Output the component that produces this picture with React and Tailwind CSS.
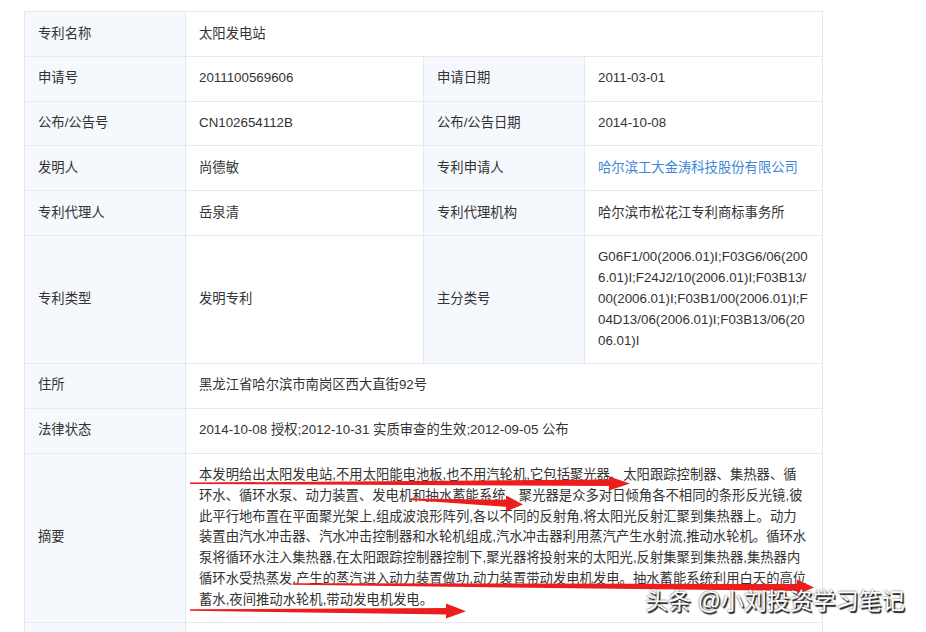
import React from "react";

const abstractLines = [
  "本发明给出太阳发电站,不用太阳能电池板,也不用汽轮机,它包括聚光器、太阳跟踪控制器、集热器、循",
  "环水、循环水泵、动力装置、发电机和抽水蓄能系统。聚光器是众多对日倾角各不相同的条形反光镜,彼",
  "此平行地布置在平面聚光架上,组成波浪形阵列,各以不同的反射角,将太阳光反射汇聚到集热器上。动力",
  "装置由汽水冲击器、汽水冲击控制器和水轮机组成,汽水冲击器利用蒸汽产生水射流,推动水轮机。循环水",
  "泵将循环水注入集热器,在太阳跟踪控制器控制下,聚光器将投射来的太阳光,反射集聚到集热器,集热器内",
  "循环水受热蒸发,产生的蒸汽进入动力装置做功,动力装置带动发电机发电。抽水蓄能系统利用白天的高位",
  "蓄水,夜间推动水轮机,带动发电机发电。",
];

const classLines = [
  "G06F1/00(2006.01)I;F03G6/06(200",
  "6.01)I;F24J2/10(2006.01)I;F03B13/",
  "00(2006.01)I;F03B1/00(2006.01)I;F",
  "04D13/06(2006.01)I;F03B13/06(20",
  "06.01)I",
];

// every text line gets a fixed box so mixed latin/CJK fonts don't grow the rows
const Line = ({ children }) => <div className="h-[20.8px] whitespace-nowrap">{children}</div>;

const Label = ({ children }) => (
  <td className="border border-[#e6eaf0] bg-[#f5f8fd] px-[13px] py-[11.5px] align-middle">
    <Line>{children}</Line>
  </td>
);

const Value = ({ children, span, lines }) => (
  <td colSpan={span} className="border border-[#e6eaf0] bg-white px-[13px] py-[11.5px] align-middle">
    {lines ? lines.map((l) => <Line key={l}>{l}</Line>) : <Line>{children}</Line>}
  </td>
);

// red marker arrows drawn over the abstract
const Arrows = () => (
  <svg className="absolute top-0 left-0 pointer-events-none" width="926" height="632" viewBox="0 0 926 632">
    <g fill="#ee1d1d">
      <polygon points="190,482.6 190,484 612,486 612,479.5" />
      <polygon points="609,476.5 630,483.5 609,490.5" />
      <polygon points="410,498.5 410,500 509,507 509,500" />
      <polygon points="506,495.5 523,504.5 506,511.5" />
      <polygon points="293,583.2 293,584.8 800,591 800,584" />
      <polygon points="797,579.5 814,587.5 797,594.5" />
      <polygon points="190,609.3 190,610.7 449,614.5 449,608" />
      <polygon points="446,603.5 466,611.3 446,618.5" />
    </g>
  </svg>
);

export default function App() {
  return (
    <div className="relative w-[926px] h-[632px] overflow-hidden bg-white font-['Liberation_Sans','Noto_Sans_CJK_SC',sans-serif] text-[13.33px] leading-[20.8px] text-[#333]">
      <div className="pt-[11px] pl-[24px]">
        <table className="table-fixed border-collapse w-[798px]">
          <colgroup>
            <col className="w-[161px]" />
            <col className="w-[238px]" />
            <col className="w-[161px]" />
            <col className="w-[238px]" />
          </colgroup>
          <tbody>
            <tr>
              <Label>专利名称</Label>
              <Value span={3}>太阳发电站</Value>
            </tr>
            <tr>
              <Label>申请号</Label>
              <Value>2011100569606</Value>
              <Label>申请日期</Label>
              <Value>2011-03-01</Value>
            </tr>
            <tr>
              <Label>公布/公告号</Label>
              <Value>CN102654112B</Value>
              <Label>公布/公告日期</Label>
              <Value>2014-10-08</Value>
            </tr>
            <tr>
              <Label>发明人</Label>
              <Value>尚德敏</Value>
              <Label>专利申请人</Label>
              <Value>
                <span className="text-[#3d87d9]">哈尔滨工大金涛科技股份有限公司</span>
              </Value>
            </tr>
            <tr>
              <Label>专利代理人</Label>
              <Value>岳泉清</Value>
              <Label>专利代理机构</Label>
              <Value>哈尔滨市松花江专利商标事务所</Value>
            </tr>
            <tr>
              <Label>专利类型</Label>
              <Value>发明专利</Value>
              <Label>主分类号</Label>
              <Value lines={classLines} />
            </tr>
            <tr>
              <Label>住所</Label>
              <Value span={3}>黑龙江省哈尔滨市南岗区西大直街92号</Value>
            </tr>
            <tr>
              <Label>法律状态</Label>
              <Value span={3}>2014-10-08 授权;2012-10-31 实质审查的生效;2012-09-05 公布</Value>
            </tr>
            <tr>
              <Label>摘要</Label>
              <Value span={3} lines={abstractLines} />
            </tr>
            <tr>
              <Label>&nbsp;</Label>
              <Value span={3}>&nbsp;</Value>
            </tr>
          </tbody>
        </table>
      </div>

      <Arrows />

      <div className="absolute left-[645px] top-[588px] whitespace-nowrap text-[23px] leading-[26px] text-white [text-shadow:1.5px_1.5px_1px_#1a1a1a,0_0_2px_rgba(0,0,0,0.8)]">
        头条 @小刘投资学习笔记
      </div>
    </div>
  );
}
